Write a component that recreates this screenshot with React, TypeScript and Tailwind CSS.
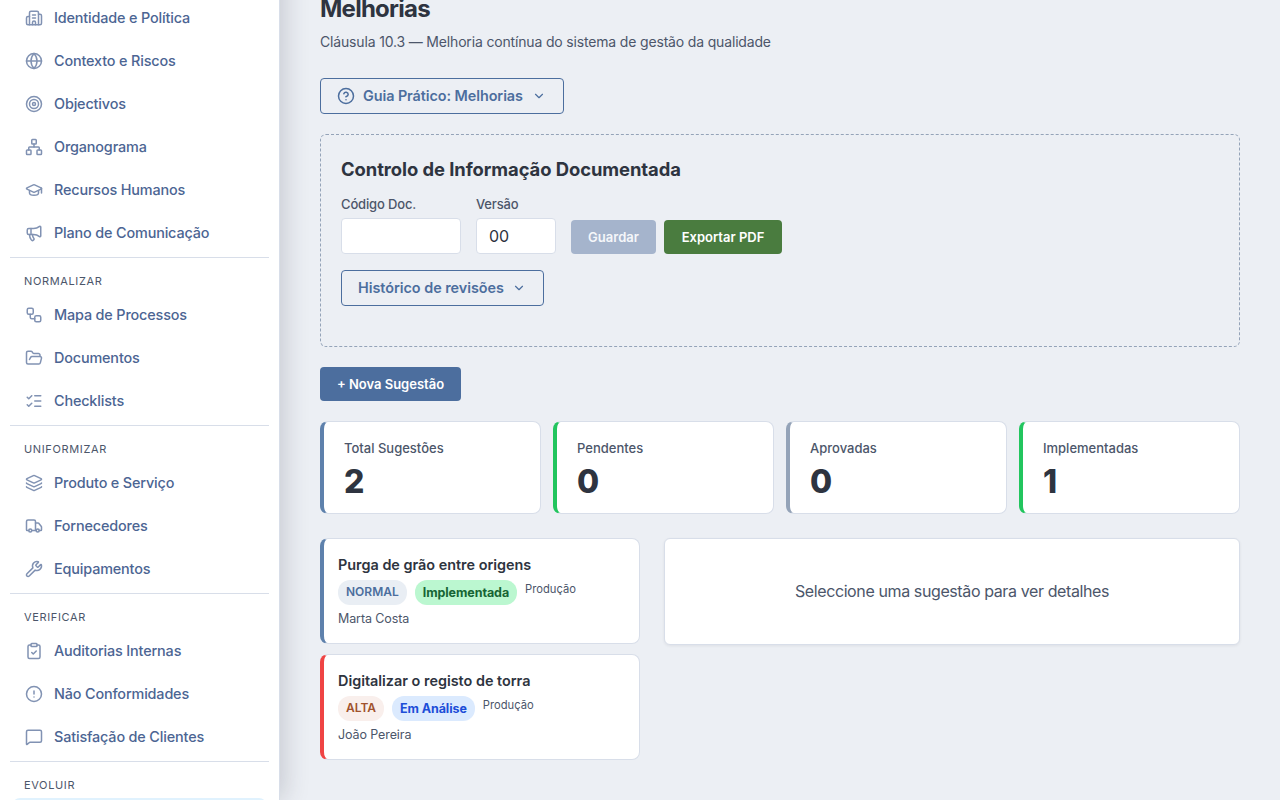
import React, { useState } from 'react';
import {
  Building2,
  ChevronDown,
  CircleAlert,
  CircleQuestionMark,
  ClipboardCheck,
  FolderOpen,
  Globe,
  GraduationCap,
  Layers,
  ListChecks,
  Megaphone,
  MessageSquare,
  Network,
  Target,
  TrendingUp,
  Truck,
  Workflow,
  Wrench,
  type LucideIcon,
} from 'lucide-react';

interface NavItem {
  label: string;
  icon: LucideIcon;
  active?: boolean;
}

interface NavSection {
  title?: string;
  items: NavItem[];
}

interface Suggestion {
  id: number;
  title: string;
  priority: string;
  priorityClass: string;
  status: string;
  statusClass: string;
  area: string;
  author: string;
  accent: string;
}

const SECTIONS: NavSection[] = [
  {
    items: [
      { label: 'Identidade e Política', icon: Building2 },
      { label: 'Contexto e Riscos', icon: Globe },
      { label: 'Objectivos', icon: Target },
      { label: 'Organograma', icon: Network },
      { label: 'Recursos Humanos', icon: GraduationCap },
      { label: 'Plano de Comunicação', icon: Megaphone },
    ],
  },
  {
    title: 'Normalizar',
    items: [
      { label: 'Mapa de Processos', icon: Workflow },
      { label: 'Documentos', icon: FolderOpen },
      { label: 'Checklists', icon: ListChecks },
    ],
  },
  {
    title: 'Uniformizar',
    items: [
      { label: 'Produto e Serviço', icon: Layers },
      { label: 'Fornecedores', icon: Truck },
      { label: 'Equipamentos', icon: Wrench },
    ],
  },
  {
    title: 'Verificar',
    items: [
      { label: 'Auditorias Internas', icon: ClipboardCheck },
      { label: 'Não Conformidades', icon: CircleAlert },
      { label: 'Satisfação de Clientes', icon: MessageSquare },
    ],
  },
  {
    title: 'Evoluir',
    items: [{ label: 'Melhorias', icon: TrendingUp, active: true }],
  },
];

const STATS = [
  { label: 'Total Sugestões', value: 2, accent: 'border-l-[#5e81ac]' },
  { label: 'Pendentes', value: 0, accent: 'border-l-[#22c55e]' },
  { label: 'Aprovadas', value: 0, accent: 'border-l-[#94a3b8]' },
  { label: 'Implementadas', value: 1, accent: 'border-l-[#22c55e]' },
];

const SUGGESTIONS: Suggestion[] = [
  {
    id: 1,
    title: 'Purga de grão entre origens',
    priority: 'NORMAL',
    priorityClass: 'bg-[#e9eef4] text-[#4c6e9e]',
    status: 'Implementada',
    statusClass: 'bg-[#bbf7d0] text-[#166534]',
    area: 'Produção',
    author: 'Marta Costa',
    accent: 'border-l-[#5e81ac]',
  },
  {
    id: 2,
    title: 'Digitalizar o registo de torra',
    priority: 'ALTA',
    priorityClass: 'bg-[#f9efec] text-[#a0522d]',
    status: 'Em Análise',
    statusClass: 'bg-[#dbeafe] text-[#1d4ed8]',
    area: 'Produção',
    author: 'João Pereira',
    accent: 'border-l-[#ef4444]',
  },
];

const Sidebar: React.FC = () => (
  <aside className="flex h-[800px] w-[280px] flex-col overflow-hidden border-r border-[#d8dee9] bg-white px-2.5">
    <nav className="-mt-[3px]">
      {SECTIONS.map((section, i) => (
        <div key={i} className={section.title ? 'mt-[3px] border-t border-[#d8dee9] pt-[15px]' : ''}>
          {section.title && (
            <h3 className="mb-1 pl-3.5 text-[11px] leading-[17px] tracking-[0.64px] text-[#4c566a] uppercase">
              {section.title}
            </h3>
          )}
          {section.items.map(({ label, icon: Icon, active }) => (
            <a
              key={label}
              href="#"
              className={`mx-0.5 mb-px flex h-[42px] items-center gap-[11px] rounded-lg px-[13px] text-[14.4px] font-medium tracking-[-0.15px] text-[#4c6593] ${active ? 'bg-[#e0f2fe]' : ''}`}
            >
              <Icon size={18} strokeWidth={2} className="shrink-0 opacity-70" />
              {label}
            </a>
          ))}
        </div>
      ))}
    </nav>
  </aside>
);

const App: React.FC = () => {
  const [code, setCode] = useState<string>('');
  const [version, setVersion] = useState<string>('00');
  const [selected, setSelected] = useState<number | null>(null);

  const current = SUGGESTIONS.find((s) => s.id === selected);

  return (
    <div className="flex h-[800px] w-[1280px] overflow-hidden bg-[#eceff4] font-[Inter,sans-serif] text-[#2e3440]">
      <div className="relative z-10 -mt-10 shrink-0 pt-10 shadow-[4px_0_24px_rgba(46,52,64,0.2)]">
        <Sidebar />
      </div>
      <main className="min-w-0 flex-1 px-10">
        <h1 className="-mt-[9px] text-[24px] leading-[36px] font-bold tracking-[-0.75px]">Melhorias</h1>
        <p className="mt-1 text-[14px] leading-[22px] tracking-[-0.165px] text-[#4c566a]">
          Cláusula 10.3 — Melhoria contínua do sistema de gestão da qualidade
        </p>

        <button className="mt-[25px] flex h-9 w-[244px] items-center rounded border border-[#4c6e9e] px-4 text-[14.4px] font-semibold tracking-[-0.07px] whitespace-nowrap text-[#4c6e9e]">
          <CircleQuestionMark size={18} strokeWidth={2} className="mr-2 shrink-0" />
          Guia Prático: Melhorias
          <ChevronDown size={14} className="ml-[9px] shrink-0" />
        </button>

        <section className="mt-5 h-[213px] rounded-md border border-dashed border-[#94a3b8] p-5">
          <h2 className="text-[18.4px] leading-[28px] font-bold tracking-[-0.06px]">Controlo de Informação Documentada</h2>
          <div className="mt-[11px] flex items-end">
            <div className="mr-[15px]">
              <label htmlFor="doc-code" className="mb-1 block text-[13px] leading-5 font-medium tracking-[-0.15px] text-[#4c566a]">Código Doc.</label>
              <input
                id="doc-code"
                value={code}
                onChange={(e) => setCode(e.target.value)}
                className="block h-9 w-[120px] rounded border border-[#d8dee9] bg-white px-3 text-base"
              />
            </div>
            <div className="mr-[15px]">
              <label htmlFor="doc-version" className="mb-1 block text-[13px] leading-5 font-medium tracking-[-0.15px] text-[#4c566a]">Versão</label>
              <input
                id="doc-version"
                value={version}
                onChange={(e) => setVersion(e.target.value)}
                className="block h-9 w-20 rounded border border-[#d8dee9] bg-white px-3 text-base"
              />
            </div>
            <button className="mr-2 h-[34px] w-[85px] rounded bg-[#a5b4cc] pt-0.5 text-[13px] font-semibold text-[#f5f7fa]">Guardar</button>
            <button className="h-[34px] w-[118px] rounded bg-[#4a7c3f] pt-0.5 text-[13px] font-semibold text-white">Exportar PDF</button>
          </div>
          <button className="mt-4 flex h-9 w-[203px] items-center rounded border border-[#4c6e9e] px-4 text-[14.4px] font-semibold tracking-[-0.03px] whitespace-nowrap text-[#4c6e9e]">
            Histórico de revisões
            <ChevronDown size={14} className="ml-2 shrink-0" />
          </button>
        </section>

        <button className="mt-5 block h-[34px] w-[141px] rounded bg-[#4c6e9e] pt-0.5 text-[13px] font-semibold text-white">
          + Nova Sugestão
        </button>

        <div className="mt-5 grid grid-cols-4 gap-3">
          {STATS.map((stat) => (
            <div key={stat.label} className={`h-[93px] rounded-lg border border-l-4 border-[#d8dee9] bg-white px-5 pt-4 ${stat.accent}`}>
              <p className="text-[13px] leading-5 font-medium text-[#4c566a]">{stat.label}</p>
              <p className="mt-[5px] text-[32px] leading-[38px] font-extrabold">{stat.value}</p>
            </div>
          ))}
        </div>

        <div className="mt-6 flex items-start gap-6">
          <div className="flex w-80 flex-col gap-2.5">
            {SUGGESTIONS.map((s) => (
              <article
                key={s.id}
                onClick={() => setSelected(s.id)}
                className={`h-[106px] cursor-pointer rounded-lg border border-l-4 border-[#d8dee9] bg-white px-3.5 pt-[15px] ${s.accent}`}
              >
                <h4 className="text-[14.4px] leading-[22px] font-semibold">{s.title}</h4>
                <div className="mt-1 flex h-[25px] gap-2">
                  <span className={`rounded-xl px-2 text-[12px] leading-[23px] font-semibold ${s.priorityClass}`}>{s.priority}</span>
                  <span className={`rounded-xl px-2 text-[12.5px] leading-[25px] font-bold tracking-[-0.08px] ${s.statusClass}`}>{s.status}</span>
                  <span className="text-[11.2px] leading-[18px] text-[#4c566a]">{s.area}</span>
                </div>
                <p className="mt-1 text-[12.5px] leading-5 tracking-[-0.1px] text-[#4c566a]">{s.author}</p>
              </article>
            ))}
          </div>
          <div className="flex h-[107px] flex-1 items-center justify-center rounded-md border border-[#d8dee9] bg-white pb-0.5 text-base tracking-[-0.39px] text-[#4c566a] shadow-[0_1px_3px_rgba(46,52,64,0.08)]">
            {current ? current.title : 'Seleccione uma sugestão para ver detalhes'}
          </div>
        </div>
      </main>
    </div>
  );
};

export default App;
